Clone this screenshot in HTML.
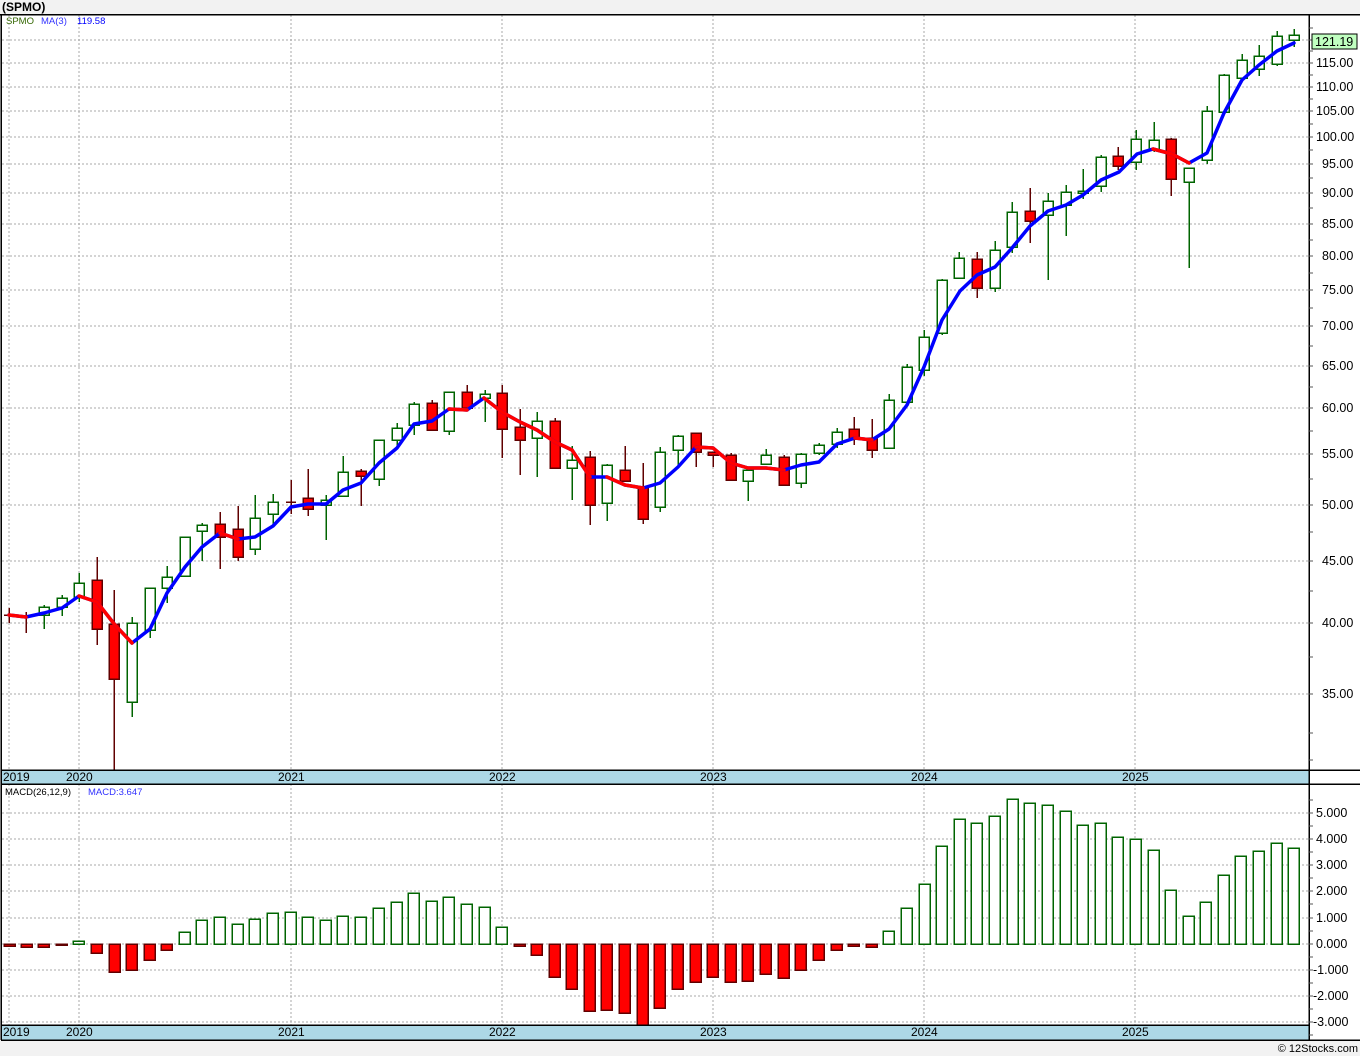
<!DOCTYPE html>
<html><head><meta charset="utf-8"><style>
html,body{margin:0;padding:0;background:#f2f2f2;}
svg{display:block;}
text{font-family:"Liberation Sans",sans-serif;}
rect,line,path{shape-rendering:crispEdges;}
</style></head><body>
<svg width="1360" height="1056" viewBox="0 0 1360 1056" xmlns="http://www.w3.org/2000/svg">
<rect x="0" y="0" width="1360" height="1056" fill="#f2f2f2"/>
<text x="2" y="11" font-size="12" font-weight="bold" fill="#000">(SPMO)</text>
<rect x="1" y="14" width="1359" height="756" fill="#fff"/>
<rect x="1" y="784" width="1359" height="241" fill="#fff"/>
<rect x="1309" y="770" width="51" height="14" fill="#fff"/>
<rect x="1309" y="1025" width="51" height="15" fill="#fff"/>
<g stroke="#aaa" stroke-width="1" stroke-dasharray="2,2">
<line x1="2" x2="1309" y1="40" y2="40"/><line x1="2" x2="1309" y1="63" y2="63"/><line x1="2" x2="1309" y1="87" y2="87"/><line x1="2" x2="1309" y1="111" y2="111"/><line x1="2" x2="1309" y1="137" y2="137"/><line x1="2" x2="1309" y1="164" y2="164"/><line x1="2" x2="1309" y1="193" y2="193"/><line x1="2" x2="1309" y1="224" y2="224"/><line x1="2" x2="1309" y1="256" y2="256"/><line x1="2" x2="1309" y1="290" y2="290"/><line x1="2" x2="1309" y1="326" y2="326"/><line x1="2" x2="1309" y1="366" y2="366"/><line x1="2" x2="1309" y1="408" y2="408"/><line x1="2" x2="1309" y1="454" y2="454"/><line x1="2" x2="1309" y1="505" y2="505"/><line x1="2" x2="1309" y1="561" y2="561"/><line x1="2" x2="1309" y1="623" y2="623"/><line x1="2" x2="1309" y1="694" y2="694"/>
<line x1="9" x2="9" y1="15" y2="770"/><line x1="79" x2="79" y1="15" y2="770"/><line x1="291" x2="291" y1="15" y2="770"/><line x1="502" x2="502" y1="15" y2="770"/><line x1="713" x2="713" y1="15" y2="770"/><line x1="924" x2="924" y1="15" y2="770"/><line x1="1135" x2="1135" y1="15" y2="770"/>
<line x1="2" x2="1309" y1="813" y2="813"/><line x1="2" x2="1309" y1="839" y2="839"/><line x1="2" x2="1309" y1="865" y2="865"/><line x1="2" x2="1309" y1="891" y2="891"/><line x1="2" x2="1309" y1="918" y2="918"/><line x1="2" x2="1309" y1="944" y2="944"/><line x1="2" x2="1309" y1="970" y2="970"/><line x1="2" x2="1309" y1="996" y2="996"/><line x1="2" x2="1309" y1="1022" y2="1022"/>
<line x1="9" x2="9" y1="784" y2="1025"/><line x1="79" x2="79" y1="784" y2="1025"/><line x1="291" x2="291" y1="784" y2="1025"/><line x1="502" x2="502" y1="784" y2="1025"/><line x1="713" x2="713" y1="784" y2="1025"/><line x1="924" x2="924" y1="784" y2="1025"/><line x1="1135" x2="1135" y1="784" y2="1025"/>
</g>
<text x="6" y="24" font-size="9.5" fill="#336600">SPMO</text>
<text x="41" y="24" font-size="9.5" fill="#3333ff">MA(3)</text>
<text x="77" y="24" font-size="9.5" fill="#0000ff">119.58</text>
<text x="5" y="795" font-size="9.5" fill="#000">MACD(26,12,9)</text>
<text x="88" y="795" font-size="9.5" fill="#3333ff">MACD:3.647</text>
<g stroke="#600000" stroke-width="1.5">
<line x1="9" x2="9" y1="608" y2="623"/><line x1="4" x2="14" y1="615" y2="615"/>
<line x1="26" x2="26" y1="612" y2="633"/><line x1="21" x2="31" y1="616" y2="616"/>
<line x1="291" x2="291" y1="480" y2="514"/><line x1="286" x2="296" y1="502" y2="502"/>
</g>
<g stroke="#006400" stroke-width="1.5" fill="#fff">
<line x1="44" x2="44" y1="605" y2="629"/><rect x="39" y="607" width="10" height="8"/>
<line x1="62" x2="62" y1="595" y2="616"/><rect x="57" y="598" width="10" height="9"/>
<line x1="79" x2="79" y1="573" y2="602"/><rect x="74" y="583" width="10" height="14"/>
<line x1="132" x2="132" y1="617" y2="717"/><rect x="127" y="623" width="10" height="79"/>
<line x1="150" x2="150" y1="588" y2="638"/><rect x="145" y="588" width="10" height="42"/>
<line x1="167" x2="167" y1="566" y2="603"/><rect x="162" y="577" width="10" height="11"/>
<line x1="185" x2="185" y1="537" y2="576"/><rect x="180" y="537" width="10" height="39"/>
<line x1="202" x2="202" y1="523" y2="561"/><rect x="197" y="525" width="10" height="6"/>
<line x1="255" x2="255" y1="495" y2="555"/><rect x="250" y="518" width="10" height="31"/>
<line x1="273" x2="273" y1="494" y2="525"/><rect x="268" y="502" width="10" height="12"/>
<line x1="326" x2="326" y1="495" y2="540"/><rect x="321" y="500" width="10" height="5"/>
<line x1="343" x2="343" y1="456" y2="496"/><rect x="338" y="472" width="10" height="24"/>
<line x1="379" x2="379" y1="440" y2="486"/><rect x="374" y="440" width="10" height="39"/>
<line x1="397" x2="397" y1="423" y2="447"/><rect x="392" y="428" width="10" height="12"/>
<line x1="414" x2="414" y1="402" y2="435"/><rect x="409" y="404" width="10" height="21"/>
<line x1="449" x2="449" y1="392" y2="435"/><rect x="444" y="392" width="10" height="39"/>
<line x1="485" x2="485" y1="390" y2="422"/><rect x="480" y="394" width="10" height="4"/>
<line x1="537" x2="537" y1="412" y2="477"/><rect x="532" y="421" width="10" height="17"/>
<line x1="572" x2="572" y1="446" y2="500"/><rect x="567" y="460" width="10" height="8"/>
<line x1="607" x2="607" y1="464" y2="521"/><rect x="602" y="465" width="10" height="38"/>
<line x1="660" x2="660" y1="447" y2="512"/><rect x="655" y="452" width="10" height="55"/>
<line x1="678" x2="678" y1="435" y2="465"/><rect x="673" y="436" width="10" height="14"/>
<line x1="748" x2="748" y1="470" y2="501"/><rect x="743" y="470" width="10" height="11"/>
<line x1="766" x2="766" y1="449" y2="464"/><rect x="761" y="455" width="10" height="9"/>
<line x1="801" x2="801" y1="453" y2="488"/><rect x="796" y="454" width="10" height="29"/>
<line x1="819" x2="819" y1="443" y2="455"/><rect x="814" y="445" width="10" height="8"/>
<line x1="837" x2="837" y1="428" y2="448"/><rect x="832" y="432" width="10" height="12"/>
<line x1="889" x2="889" y1="394" y2="448"/><rect x="884" y="400" width="10" height="48"/>
<line x1="907" x2="907" y1="364" y2="402"/><rect x="902" y="367" width="10" height="35"/>
<line x1="924" x2="924" y1="330" y2="376"/><rect x="919" y="337" width="10" height="33"/>
<line x1="942" x2="942" y1="279" y2="335"/><rect x="937" y="280" width="10" height="53"/>
<line x1="959" x2="959" y1="252" y2="278"/><rect x="954" y="258" width="10" height="20"/>
<line x1="995" x2="995" y1="241" y2="292"/><rect x="990" y="250" width="10" height="38"/>
<line x1="1012" x2="1012" y1="202" y2="253"/><rect x="1007" y="212" width="10" height="35"/>
<line x1="1048" x2="1048" y1="193" y2="280"/><rect x="1043" y="201" width="10" height="14"/>
<line x1="1066" x2="1066" y1="185" y2="236"/><rect x="1061" y="192" width="10" height="13"/>
<line x1="1083" x2="1083" y1="169" y2="199"/><rect x="1078" y="191" width="10" height="2"/>
<line x1="1101" x2="1101" y1="155" y2="192"/><rect x="1096" y="157" width="10" height="29"/>
<line x1="1136" x2="1136" y1="130" y2="170"/><rect x="1131" y="139" width="10" height="23"/>
<line x1="1154" x2="1154" y1="122" y2="152"/><rect x="1149" y="140" width="10" height="10"/>
<line x1="1189" x2="1189" y1="168" y2="268"/><rect x="1184" y="168" width="10" height="14"/>
<line x1="1207" x2="1207" y1="106" y2="164"/><rect x="1202" y="111" width="10" height="49"/>
<line x1="1224" x2="1224" y1="74" y2="112"/><rect x="1219" y="75" width="10" height="37"/>
<line x1="1242" x2="1242" y1="54" y2="78"/><rect x="1237" y="60" width="10" height="18"/>
<line x1="1259" x2="1259" y1="45" y2="76"/><rect x="1254" y="56" width="10" height="13"/>
<line x1="1277" x2="1277" y1="31" y2="66"/><rect x="1272" y="36" width="10" height="28"/>
<line x1="1294" x2="1294" y1="29" y2="47"/><rect x="1289" y="35" width="10" height="5"/>
</g>
<g stroke="#600000" stroke-width="1.5" fill="#ff0000">
<line x1="97" x2="97" y1="557" y2="645"/><rect x="92" y="580" width="10" height="49"/>
<line x1="114" x2="114" y1="590" y2="770"/><rect x="109" y="624" width="10" height="55"/>
<line x1="220" x2="220" y1="512" y2="569"/><rect x="215" y="524" width="10" height="13"/>
<line x1="238" x2="238" y1="506" y2="561"/><rect x="233" y="529" width="10" height="28"/>
<line x1="308" x2="308" y1="469" y2="516"/><rect x="303" y="498" width="10" height="11"/>
<line x1="361" x2="361" y1="469" y2="506"/><rect x="356" y="471" width="10" height="5"/>
<line x1="432" x2="432" y1="400" y2="430"/><rect x="427" y="403" width="10" height="27"/>
<line x1="467" x2="467" y1="385" y2="408"/><rect x="462" y="392" width="10" height="16"/>
<line x1="502" x2="502" y1="385" y2="458"/><rect x="497" y="393" width="10" height="36"/>
<line x1="520" x2="520" y1="409" y2="475"/><rect x="515" y="427" width="10" height="13"/>
<line x1="555" x2="555" y1="418" y2="468"/><rect x="550" y="421" width="10" height="47"/>
<line x1="590" x2="590" y1="451" y2="525"/><rect x="585" y="457" width="10" height="48"/>
<line x1="625" x2="625" y1="446" y2="481"/><rect x="620" y="470" width="10" height="11"/>
<line x1="643" x2="643" y1="463" y2="524"/><rect x="638" y="487" width="10" height="32"/>
<line x1="696" x2="696" y1="433" y2="467"/><rect x="691" y="433" width="10" height="19"/>
<line x1="713" x2="713" y1="452" y2="467"/><rect x="708" y="452" width="10" height="3"/>
<line x1="731" x2="731" y1="453" y2="480"/><rect x="726" y="455" width="10" height="25"/>
<line x1="784" x2="784" y1="455" y2="486"/><rect x="779" y="457" width="10" height="28"/>
<line x1="854" x2="854" y1="417" y2="445"/><rect x="849" y="429" width="10" height="10"/>
<line x1="872" x2="872" y1="419" y2="458"/><rect x="867" y="438" width="10" height="12"/>
<line x1="977" x2="977" y1="252" y2="298"/><rect x="972" y="259" width="10" height="29"/>
<line x1="1030" x2="1030" y1="188" y2="243"/><rect x="1025" y="211" width="10" height="10"/>
<line x1="1118" x2="1118" y1="147" y2="170"/><rect x="1113" y="156" width="10" height="10"/>
<line x1="1171" x2="1171" y1="138" y2="196"/><rect x="1166" y="139" width="10" height="40"/>
</g>
<g fill="none" stroke-width="3.5" stroke-linejoin="round" stroke-linecap="round">
<polyline stroke="#0000ff" points="9,615 26,617 44,613 62,608 79,596 97,602 115,625 132,643 150,629 167,593 185,567 202,547 220,533 238,539 255,537 273,526 291,507 308,504 326,504 343,490 361,483 379,463 397,448 414,424 432,421 449,409 467,410 484,398 502,412 520,422 537,430 555,442 572,450 590,477 607,477 625,485 643,488 660,483 678,467 696,447 713,448 731,463 748,468 766,468 784,470 801,465 819,462 837,444 855,438 872,440 889,429 907,405 924,367 942,320 960,291 977,275 995,267 1012,248 1030,226 1048,211 1066,205 1083,195 1101,180 1119,172 1137,154 1153,149 1172,154 1189,163 1207,153 1224,113 1242,80 1259,65 1277,51 1294,43"/>
<g stroke="#ff0000">
<polyline points="9,615 26,617"/>
<polyline points="79,596 97,602 115,625 132,643"/>
<polyline points="220,533 238,539"/>
<polyline points="449,409 467,410"/>
<polyline points="484,398 502,412 520,422 537,430 555,442 572,450 590,477"/>
<polyline points="607,477 625,485 643,488"/>
<polyline points="696,447 713,448 731,463 748,468 766,468 784,470"/>
<polyline points="855,438 872,440"/>
<polyline points="1153,149 1172,154 1189,163"/>
</g></g>
<g stroke="#600000" stroke-width="1.5" fill="#ff0000">
<rect x="4" y="944" width="11" height="2"/><rect x="21" y="944" width="11" height="3"/><rect x="38" y="944" width="11" height="3"/><rect x="56" y="944" width="11" height="1"/>
<rect x="91" y="944" width="11" height="9"/><rect x="109" y="944" width="11" height="28"/><rect x="126" y="944" width="11" height="26"/><rect x="144" y="944" width="11" height="16"/><rect x="161" y="944" width="11" height="6"/>
<rect x="514" y="944" width="11" height="2"/><rect x="531" y="944" width="11" height="11"/><rect x="549" y="944" width="11" height="33"/><rect x="566" y="944" width="11" height="45"/><rect x="584" y="944" width="11" height="67"/><rect x="601" y="944" width="11" height="66"/><rect x="619" y="944" width="11" height="69"/><rect x="637" y="944" width="11" height="81"/><rect x="654" y="944" width="11" height="64"/><rect x="672" y="944" width="11" height="45"/><rect x="690" y="944" width="11" height="38"/><rect x="707" y="944" width="11" height="33"/><rect x="725" y="944" width="11" height="38"/><rect x="742" y="944" width="11" height="37"/><rect x="760" y="944" width="11" height="30"/><rect x="778" y="944" width="11" height="34"/><rect x="795" y="944" width="11" height="26"/><rect x="813" y="944" width="11" height="16"/><rect x="831" y="944" width="11" height="6"/><rect x="848" y="944" width="11" height="2"/><rect x="866" y="944" width="11" height="3"/>
</g>
<g stroke="#006400" stroke-width="1.5" fill="#fff">
<rect x="73" y="941" width="11" height="3"/>
<rect x="179" y="932" width="11" height="12"/><rect x="196" y="920" width="11" height="24"/><rect x="214" y="917" width="11" height="27"/><rect x="232" y="924" width="11" height="20"/><rect x="249" y="919" width="11" height="25"/><rect x="267" y="913" width="11" height="31"/><rect x="285" y="912" width="11" height="32"/><rect x="302" y="917" width="11" height="27"/><rect x="320" y="920" width="11" height="24"/><rect x="337" y="916" width="11" height="28"/><rect x="355" y="917" width="11" height="27"/><rect x="373" y="908" width="11" height="36"/><rect x="391" y="902" width="11" height="42"/><rect x="408" y="893" width="11" height="51"/><rect x="426" y="901" width="11" height="43"/><rect x="443" y="897" width="11" height="47"/><rect x="461" y="904" width="11" height="40"/><rect x="479" y="907" width="11" height="37"/><rect x="496" y="927" width="11" height="17"/>
<rect x="883" y="931" width="11" height="13"/><rect x="901" y="908" width="11" height="36"/><rect x="919" y="884" width="11" height="60"/><rect x="936" y="846" width="11" height="98"/><rect x="954" y="819" width="11" height="125"/><rect x="971" y="823" width="11" height="121"/><rect x="989" y="816" width="11" height="128"/><rect x="1007" y="799" width="11" height="145"/><rect x="1024" y="803" width="11" height="141"/><rect x="1042" y="805" width="11" height="139"/><rect x="1060" y="811" width="11" height="133"/><rect x="1077" y="825" width="11" height="119"/><rect x="1095" y="823" width="11" height="121"/><rect x="1112" y="837" width="11" height="107"/><rect x="1130" y="839" width="11" height="105"/><rect x="1148" y="850" width="11" height="94"/><rect x="1165" y="890" width="11" height="54"/><rect x="1183" y="916" width="11" height="28"/><rect x="1200" y="902" width="11" height="42"/><rect x="1218" y="875" width="11" height="69"/><rect x="1235" y="856" width="11" height="88"/><rect x="1253" y="851" width="11" height="93"/><rect x="1271" y="843" width="11" height="101"/><rect x="1288" y="848" width="11" height="96"/>
</g>
<rect x="1" y="770" width="1308" height="14" fill="#add8e6"/>
<rect x="1" y="1025" width="1308" height="15" fill="#add8e6"/>
<g font-size="12" fill="#000">
<text x="3" y="781">2019</text><text x="66" y="781">2020</text><text x="278" y="781">2021</text><text x="489" y="781">2022</text><text x="700" y="781">2023</text><text x="911" y="781">2024</text><text x="1122" y="781">2025</text>
<text x="3" y="1036">2019</text><text x="66" y="1036">2020</text><text x="278" y="1036">2021</text><text x="489" y="1036">2022</text><text x="700" y="1036">2023</text><text x="911" y="1036">2024</text><text x="1122" y="1036">2025</text>
</g>
<g stroke="#000" stroke-width="1.5" fill="none">
<line x1="0" x2="1360" y1="14.5" y2="14.5"/>
<line x1="1" x2="1360" y1="770" y2="770"/>
<line x1="1" x2="1360" y1="784" y2="784"/>
<line x1="1" x2="1309" y1="1025" y2="1025"/>
<line x1="1" x2="1360" y1="1040" y2="1040"/>
<line x1="1" x2="1" y1="14" y2="1040"/>
<line x1="1309" x2="1309" y1="14" y2="1040"/>
</g>
<g stroke="#555" stroke-width="1">
<path d="M1309 28h4M1309 40h4M1309 51h4M1309 63h4M1309 75h4M1309 87h4M1309 99h4M1309 111h4M1309 124h4M1309 137h4M1309 150h4M1309 164h4M1309 178h4M1309 193h4M1309 208h4M1309 224h4M1309 240h4M1309 256h4M1309 273h4M1309 290h4M1309 308h4M1309 326h4M1309 346h4M1309 366h4M1309 387h4M1309 408h4M1309 431h4M1309 454h4M1309 479h4M1309 505h4M1309 532h4M1309 561h4M1309 591h4M1309 623h4M1309 657h4M1309 694h4M1309 733h4M1309 760h4"/>
<path d="M1309 800h4M1309 813h4M1309 826h4M1309 839h4M1309 852h4M1309 865h4M1309 878h4M1309 891h4M1309 904h4M1309 918h4M1309 931h4M1309 944h4M1309 957h4M1309 970h4M1309 983h4M1309 996h4M1309 1009h4M1309 1022h4M1309 1035h4"/>
</g>
<g font-size="12.5" fill="#000">
<text x="1316" y="67">115.00</text><text x="1316" y="91">110.00</text><text x="1316" y="115">105.00</text><text x="1316" y="141">100.00</text><text x="1322" y="168">95.00</text><text x="1322" y="197">90.00</text><text x="1322" y="228">85.00</text><text x="1322" y="260">80.00</text><text x="1322" y="294">75.00</text><text x="1322" y="330">70.00</text><text x="1322" y="370">65.00</text><text x="1322" y="412">60.00</text><text x="1322" y="458">55.00</text><text x="1322" y="509">50.00</text><text x="1322" y="565">45.00</text><text x="1322" y="627">40.00</text><text x="1322" y="698">35.00</text>
<text x="1316" y="817">5.000</text><text x="1316" y="843">4.000</text><text x="1316" y="869">3.000</text><text x="1316" y="895">2.000</text><text x="1316" y="922">1.000</text><text x="1316" y="948">0.000</text><text x="1313" y="974">-1.000</text><text x="1313" y="1000">-2.000</text><text x="1313" y="1026">-3.000</text>
</g>
<rect x="1312" y="34" width="45" height="15" fill="#c0ffc0" stroke="#000" stroke-width="1"/>
<text x="1315" y="46" font-size="12.5" fill="#000">121.19</text>
<text x="1358" y="1052" font-size="11" fill="#000" text-anchor="end">© 12Stocks.com</text>
</svg>
</body></html>
